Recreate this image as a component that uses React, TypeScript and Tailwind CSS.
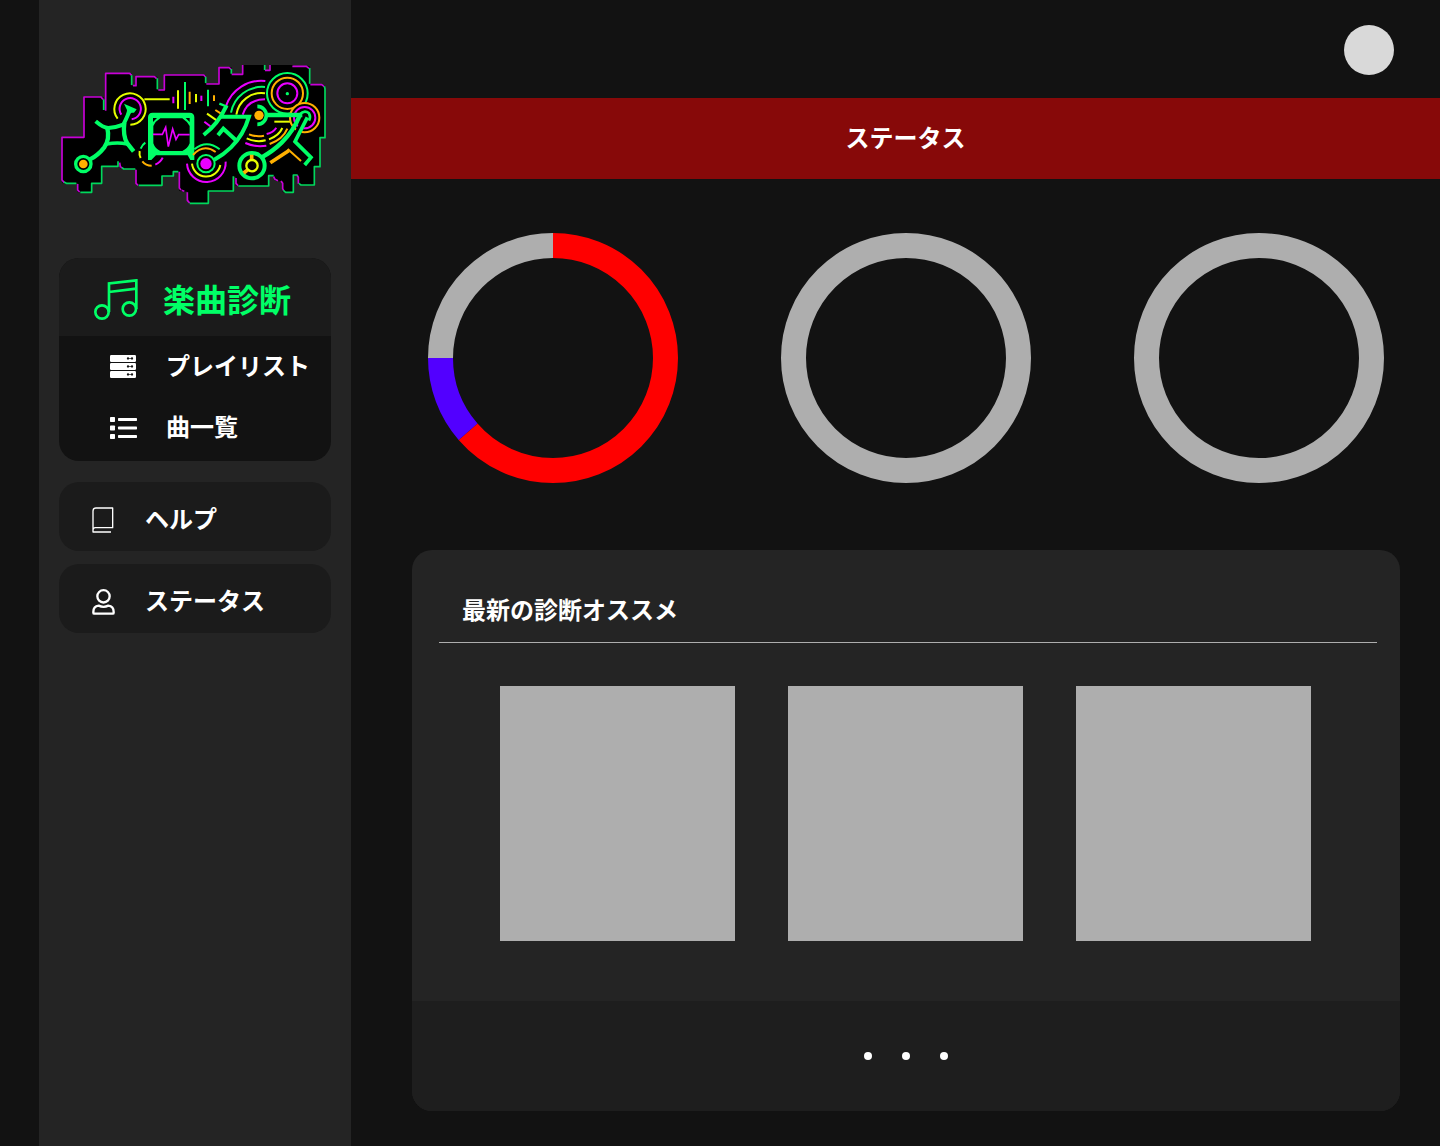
import type { ReactNode } from "react";

const GREEN = "#00ff66";
const PINK = "#e800ff";
const YELLOW = "#e6ff00";
const ORANGE = "#ffb000";

function Logo() {
  return (
    <svg
      viewBox="12 15 801 420"
      className="h-[140px] w-[267px] overflow-visible"
      role="img"
      aria-label="メロタス"
      fill="none"
      strokeWidth="5"
    >
      {/* black skyline */}
      <path
        fill="#000"
        d="M22 232H87V111H146V150H152V40H230V77H242V50H307V90H328V45H452V72H492V22H530V43H563V15H629V32H645V15H714L716 19H764V73L810 76V233H795V320H778V375H730V345H715V397H683V365L660 362 657 347H641V378H542V350H535V393H460V430H402L397 395 373 393V335H355V348H321V376H243V327H198L190 305 188 319H140V370H110V397H68V370H22Z"
      />
      {/* skyline edges */}
      <g stroke="#c800d8" strokeLinejoin="round">
        <path d="M28 368L21 360V232H87V111H138L144 118M152 152V40H224L230 46M234 77H243V50H298L305 56M310 90H328V45H446L452 51M454 72H492V23H522L528 28M530 43H563V15M630 31H645V15M712 19H754L762 25M766 74H800L808 80M730 371V352L726 346M686 392L683 386V370L678 363M669 362L660 358 656 350M549 377L543 370V354M404 429L397 421V397M388 394L380 391M378 390L373 384V335M249 376L243 370V329M203 325L196 320 194 308M74 396L68 390V372" />
      </g>
      <g stroke="#00d85c" strokeLinejoin="round">
        <path d="M146 118V150M230 46V75M307 55V88M452 50V69M529 27V41M629 15V30M764 24V71M808 79L810 86V233H795V320H778V375H738L731 370M728 345H715V397H692L685 391M656 347H641V378H550M535 349V393H460V430H404M370 335H355V348H321V376H251M241 327H206L201 323M189 304V319H140V370H110V397H76M64 370H34L27 366" />
      </g>
      {/* left rings and equaliser */}
      <g strokeWidth="6">
        <path stroke={YELLOW} d="M188 176A47 47 0 1 1 226 194M268 118H344" />
        <path stroke={PINK} d="M199 164A32 32 0 1 1 230 178M355 110V130" />
        <path stroke={YELLOW} d="M369 91V146M423 102V127" />
        <path stroke={GREEN} d="M390 66V150M459 89V139" />
        <path stroke={ORANGE} d="M404 95V132M477 106V123" />
        <path stroke={PINK} d="M439 107V123" />
      </g>
      {/* first stroke group */}
      <g stroke={GREEN} strokeWidth="13" strokeLinejoin="round">
        <path d="M122 184Q145 204 160 204Q182 203 205 194Q213 178 224 152" strokeWidth="12" />
        <path d="M157 204Q165 238 148 262Q128 287 105 298" />
        <path d="M208 188Q203 228 217 250L236 274" />
        <path d="M155 252Q188 246 217 252" strokeWidth="11" />
      </g>
      <path fill={GREEN} d="M207 131L245 148 237 158 230 158 214 166 216 150Z" />
      <circle cx="85" cy="312" r="23" stroke={GREEN} strokeWidth="10" fill="#000" />
      <circle cx="85" cy="312" r="13" fill={ORANGE} />
      <g strokeWidth="6">
        <path stroke={GREEN} d="M257 266Q262 254 271 248" />
        <path stroke={YELLOW} d="M254 273Q252 284 257 294" />
        <path stroke={ORANGE} d="M262 304Q272 317 290 317" />
        <path stroke={PINK} d="M301 314Q317 307 323 293" />
      </g>
      {/* monitor with pulse */}
      <path
        fill={GREEN}
        fillRule="evenodd"
        d="M279 300V172Q279 158 293 158H404Q418 158 418 172V300H406L398 286H303L289 300ZM295 198V250Q300 266 316 273H382Q398 266 404 250V198Q396 184 382 175H316Q302 183 295 198ZM294 174V186L306 174ZM392 174L404 186V174Z"
      />
      <path stroke={PINK} strokeWidth="5" d="M294 223H322L332 202 340 260 353 207 363 238 371 224H404" />
      {/* large record arcs */}
      <g strokeWidth="6">
        <path stroke={PINK} d="M513 138A112 112 0 0 1 631 63M571 249Q600 262 634 257" />
        <path stroke={GREEN} d="M528 158A95 95 0 0 1 630 81" />
        <path stroke={YELLOW} d="M544 164A76 76 0 0 1 630 100M575 235Q603 248 632 241" />
        <path stroke={PINK} d="M563 164Q577 118 630 118M635 222Q655 217 664 203" />
        <path stroke={ORANGE} d="M582 223Q604 232 627 227M644 252Q684 238 697 206" />
        <path stroke={YELLOW} d="M642 238Q672 227 682 204" />
        <path stroke={YELLOW} d="M658 185H722" />
        <path stroke={ORANGE} d="M481 150L498 161" />
        <path stroke={YELLOW} d="M456 161L485 181" />
        <path stroke={PINK} d="M448 185L466 199" />
      </g>
      {/* upper right discs */}
      <g strokeWidth="6">
        <circle cx="697" cy="100" r="61" stroke={GREEN} fill="#000" />
        <circle cx="697" cy="100" r="47" stroke={ORANGE} />
        <circle cx="697" cy="100" r="30" stroke={PINK} />
        <circle cx="697" cy="101" r="5" fill={GREEN} />
        <circle cx="749" cy="173" r="44" stroke={ORANGE} fill="#000" />
        <circle cx="749" cy="173" r="32" stroke={PINK} />
      </g>
      {/* lower left disc */}
      <g strokeWidth="6">
        <path stroke={PINK} d="M396 311A58 58 0 0 0 512 305" />
        <path stroke={YELLOW} d="M411 311A43 43 0 0 0 496 315" />
        <path stroke={ORANGE} d="M414 285Q446 250 482 276" />
        <path stroke={GREEN} d="M418 268Q455 237 494 268" />
        <circle cx="453" cy="311" r="26" stroke={GREEN} />
        <circle cx="453" cy="311" r="17" fill={PINK} />
      </g>
      {/* second stroke group */}
      <g stroke={GREEN} strokeWidth="12">
        <path d="M493 131L519 141" strokeWidth="7" />
        <path d="M513 140Q490 191 446 225" />
        <path d="M496 170H582Q566 225 528 262Q507 283 478 299" />
        <path d="M489 226L505 206 543 241" />
      </g>
      {/* third stroke group */}
      <path fill="#000" d="M740 178L758 182 724 245 700 250Z" />
      <g stroke={GREEN} strokeWidth="13">
        <path d="M607 139A27 27 0 1 1 607 193" strokeWidth="11" />
        <path d="M637 165H742" />
        <path d="M735 165Q715 214 680 248Q652 275 620 292" />
        <path d="M757 172L720 245 768 292 749 315" strokeWidth="11" />
        <path d="M733 164Q748 148 762 160Q768 170 762 182" strokeWidth="8" />
        <circle cx="591" cy="317" r="38" fill="#000" strokeWidth="12" />
      </g>
      <circle cx="612" cy="166" r="14" fill={ORANGE} />
      <path stroke={ORANGE} strokeWidth="11" d="M590 284V300M566 339L580 328" />
      <circle cx="591" cy="317" r="17" stroke={YELLOW} strokeWidth="7" />
      <path stroke={ORANGE} strokeWidth="11" d="M646 308L701 272" />
      <path stroke={ORANGE} strokeWidth="6" d="M698 267L738 303" />
    </svg>
  );
}

function MusicIcon() {
  return (
    <svg viewBox="42 27 132 126" className="h-[42px] w-[44px]" fill="none" stroke="currentColor" strokeWidth="8" aria-hidden="true">
      <circle cx="66" cy="126" r="20" />
      <circle cx="148" cy="117" r="20" />
      <path d="M87 126V40L169 31V117M87 66L169 56" />
    </svg>
  );
}

function ServerIcon() {
  return (
    <svg viewBox="0 0 78 69" className="h-[23px] w-[26px]" aria-hidden="true">
      {[0, 24, 48].map((y) => (
        <g key={y}>
          <rect y={y} width="78" height="21" rx="4" fill="#fff" />
          <path d={`M54 ${y + 10.5}H66`} stroke="#121212" strokeWidth="2" />
          <circle cx="54" cy={y + 10.5} r="3.5" fill="#121212" />
          <circle cx="66" cy={y + 10.5} r="3.5" fill="#121212" />
        </g>
      ))}
    </svg>
  );
}

function ListIcon() {
  return (
    <svg viewBox="0 0 81 66" className="h-[22px] w-[27px]" fill="#fff" aria-hidden="true">
      {[0, 25.5, 51].map((y) => (
        <g key={y}>
          <rect y={y} width="15" height="15" rx="2" />
          <rect x="24" y={y + 3} width="57" height="9" rx="2" />
        </g>
      ))}
    </svg>
  );
}

function BookIcon() {
  return (
    <svg viewBox="0 0 66 78" className="h-[26px] w-[22px]" fill="none" stroke="#fff" strokeWidth="4" aria-hidden="true">
      <path d="M3 68V12Q3 3 12 3H62V62H10Q3 62 3 69V75H57" strokeLinejoin="round" />
    </svg>
  );
}

function UserIcon() {
  return (
    <svg viewBox="0 0 69 78" className="h-[26px] w-[23px]" fill="none" stroke="#fff" strokeWidth="7" aria-hidden="true">
      <circle cx="34.5" cy="22" r="18.5" />
      <path d="M20 50Q4 52 4 69V71Q4 74 7 74H62Q65 74 65 71V69Q65 52 49 50Q34.5 57 20 50Z" strokeLinejoin="round" />
    </svg>
  );
}

function SubLink({ icon, children }: { icon: ReactNode; children: ReactNode }) {
  return (
    <a href="#" className="flex h-[61px] items-center pl-[51px]">
      <span className="w-14 shrink-0">{icon}</span>
      <span className="pb-1 whitespace-nowrap">{children}</span>
    </a>
  );
}

function SideLink({ icon, children }: { icon: ReactNode; children: ReactNode }) {
  return (
    <a href="#" className="flex h-[69px] items-center rounded-[20px] bg-[#1b1b1b] pt-1.5 pl-[33px]">
      <span className="w-[53px] shrink-0">{icon}</span>
      <span className="pb-1">{children}</span>
    </a>
  );
}

type Segment = { color: string; from: number; to: number };

function Ring({ label, segments = [] }: { label: string; segments?: Segment[] }) {
  const filled = segments.length > 0 ? segments[segments.length - 1].to : 0;
  const arcs = [...segments, { color: "#aeaeae", from: filled, to: 360 }];
  return (
    <svg viewBox="0 0 250 250" className="size-[250px]" role="img" aria-label={label} fill="none" strokeWidth="25">
      {arcs.map((s) => (
        <circle
          key={s.color}
          cx="125"
          cy="125"
          r="112.5"
          stroke={s.color}
          pathLength="360"
          strokeDasharray={s.to - s.from < 360 ? `${s.to - s.from} 360` : undefined}
          transform={`rotate(${s.from - 90} 125 125)`}
        />
      ))}
    </svg>
  );
}

export default function App() {
  return (
    <div className="flex min-h-screen bg-[#121212] pl-[39px] font-['Noto_Sans_CJK_JP',sans-serif] text-2xl font-bold text-white">
      <aside className="w-[312px] shrink-0 bg-[#242424] px-5 pt-[65px]">
        <a href="#" className="block">
          <Logo />
        </a>
        <nav className="mt-[53px]">
          <div className="overflow-hidden rounded-[20px] bg-[#121212] pb-[3px]">
            <a href="#" className="flex h-[78px] items-center bg-[#1b1b1b] pt-1.5 pl-[35px] text-[32px] text-[#00ff66]">
              <span className="w-[69px] shrink-0">
                <MusicIcon />
              </span>
              <span className="pb-1">楽曲診断</span>
            </a>
            <SubLink icon={<ServerIcon />}>プレイリスト</SubLink>
            <SubLink icon={<ListIcon />}>曲一覧</SubLink>
          </div>
          <div className="mt-[21px] flex flex-col gap-[13px]">
            <SideLink icon={<BookIcon />}>ヘルプ</SideLink>
            <SideLink icon={<UserIcon />}>ステータス</SideLink>
          </div>
        </nav>
      </aside>

      <main className="min-w-0 flex-1">
        <header className="flex h-[98px] items-center justify-end pt-0.5 pr-[46px]">
          <button type="button" aria-label="アカウント" className="size-[50px] rounded-full bg-[#d9d9d9]" />
        </header>
        <h1 className="flex h-[81px] items-center justify-center bg-[#870909] pb-1 pl-5">ステータス</h1>

        <section className="mt-[54px] flex justify-between pr-14 pl-[77px]">
          <Ring
            label="ステータス 1"
            segments={[
              { color: "#ff0000", from: 0, to: 229 },
              { color: "#5200ff", from: 229, to: 270 },
            ]}
          />
          <Ring label="ステータス 2" />
          <Ring label="ステータス 3" />
        </section>

        <section className="mt-[67px] mr-10 mb-[35px] ml-[61px] overflow-hidden rounded-[20px] bg-[#242424]">
          <div className="pt-[39px] pb-[60px]">
            <h2 className="mr-[23px] ml-[27px] h-[54px] border-b border-[#aeaeae] pl-[23px] leading-10">
              最新の診断オススメ
            </h2>
            <div className="mt-[43px] grid grid-cols-3 gap-[53px] pr-[89px] pl-[88px]">
              <div className="h-[255px] bg-[#aeaeae]" />
              <div className="h-[255px] bg-[#aeaeae]" />
              <div className="h-[255px] bg-[#aeaeae]" />
            </div>
          </div>
          <button type="button" aria-label="もっと見る" className="flex h-[110px] w-full items-center justify-center gap-[30px] bg-[#1e1e1e]">
            <span className="size-2 rounded-full bg-white" />
            <span className="size-2 rounded-full bg-white" />
            <span className="size-2 rounded-full bg-white" />
          </button>
        </section>
      </main>
    </div>
  );
}
